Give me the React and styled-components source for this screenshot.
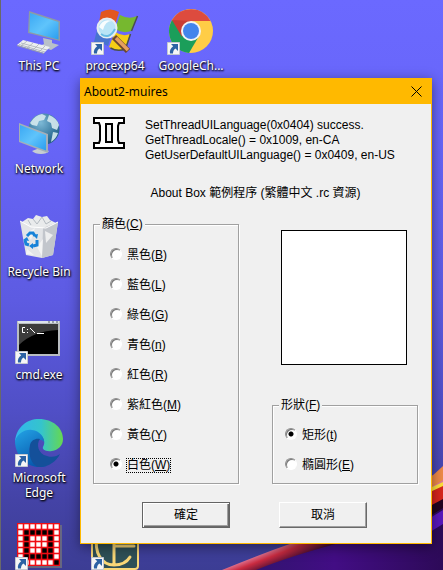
import React, { useState } from "react";
import styled, { createGlobalStyle } from "styled-components";

const GlobalStyle = createGlobalStyle`
  *, *::before, *::after { box-sizing: border-box; }
  body { margin: 0; }
`;

const Desktop = styled.main`
  position: relative;
  min-height: 100vh;
  overflow: hidden;
  isolation: isolate;
  border-left: 1px solid #696969;
  background: linear-gradient(#6b69ff 0, #6765f8 140px, #5d5be2 300px, #504fc6 410px, #4443a6 500px, #3c3d94 570px);
`;

const Wallpaper = styled.svg`
  position: absolute;
  inset: 0;
  width: 100%;
  height: 100%;
  z-index: -1;
`;

const IconGrid = styled.nav`
  height: 100vh;
  display: grid;
  grid-template-columns: repeat(auto-fill, 76px);
  grid-auto-rows: 103px;
`;

const Shortcut = styled.a`
  grid-column: ${(p) => p.$col};
  grid-row: ${(p) => p.$row};
  display: flex;
  flex-direction: column;
  align-items: center;
  gap: 3px;
  padding-top: 7px;
  color: #fff;
  font: 12px/15px "Noto Sans", "Open Sans", sans-serif;
  text-align: center;
  text-decoration: none;
  text-shadow: 1px 1px 2px #000, 0 1px 2px #000;
`;

const Picture = styled.svg`
  flex: none;
  width: 48px;
  height: 48px;
  overflow: visible;
`;

const Dialog = styled.section`
  position: absolute;
  top: 78px;
  left: 79px;
  right: 11px;
  border: 1px solid #ffb900;
  background: #f0f0f0;
  color: #000;
  font: 12px/15px "Liberation Sans", "Noto Sans CJK TC", sans-serif;
  box-shadow: 0 3px 12px rgba(0, 0, 0, 0.45);
`;

const TitleBar = styled.header`
  display: flex;
  align-items: center;
  justify-content: space-between;
  height: 25px;
  padding-left: 3px;
  background: #ffb900;
`;

const Title = styled.h1`
  margin: 0;
  font: 12px/16px "Noto Sans", "Open Sans", sans-serif;
`;

const CloseButton = styled.button`
  display: grid;
  place-items: center;
  width: 30px;
  height: 25px;
  padding: 0;
  border: 0;
  background: none;
`;

const Body = styled.form`
  padding: 13px 13px 15px 12px;
`;

const Intro = styled.div`
  display: flex;
  gap: 20px;
`;

const Emblem = styled.svg`
  flex: none;
  width: 32px;
  height: 32px;
`;

const Messages = styled.p`
  margin: 0;
  padding-top: 1px;
  white-space: nowrap;
`;

const Caption = styled.p`
  margin: 23px 0 0;
  text-align: center;
`;

const Columns = styled.div`
  display: grid;
  grid-template-columns: 1fr 1fr;
  gap: 33px;
  margin-top: 16px;
`;

const Side = styled.div`
  display: flex;
  flex-direction: column;
  justify-content: space-between;
`;

const Preview = styled.div`
  height: 135px;
  margin: 13px 11px 0 9px;
  border: 1px solid #000;
  background: #fff;
`;

const Group = styled.fieldset`
  min-width: 0;
  margin: 0;
  padding: ${(p) => (p.$inset ? "16px 0 10px 16px" : "15px 0 10px 12px")};
  border: 1px solid #a0a0a0;
  box-shadow: 1px 1px 0 #fff, inset 1px 1px 0 #fff;
`;

const Legend = styled.legend`
  margin-left: ${(p) => (p.$inset ? "-10px" : "-6px")};
  padding: 0 2px;
  background: #f0f0f0;
`;

const Options = styled.div`
  display: grid;
  gap: 15px;
  justify-items: start;
`;

const Option = styled.label`
  display: flex;
  align-items: flex-start;
  gap: 4px;
`;

const Radio = styled.input`
  appearance: none;
  width: 12px;
  height: 12px;
  margin: 0;
  border: 1px solid;
  border-color: #8c8c8c #fff #fff #8c8c8c;
  border-radius: 50%;
  background: #fff;
  box-shadow: inset 1px 1px 0 #777;
  outline: none;

  &:checked {
    background: radial-gradient(circle, #000 0 2px, #fff 3px);
  }
`;

const OptionText = styled.span`
  padding: 0 1px;
  outline: ${(p) => (p.$focused ? "1px dotted #000" : "none")};
  outline-offset: -1px;
`;

const Actions = styled.div`
  display: flex;
  justify-content: center;
  gap: 49px;
  margin-top: 18px;
  padding-right: 2px;
`;

const PushButton = styled.button`
  width: 88px;
  height: 26px;
  padding: 0;
  border: 1px solid;
  border-color: ${(p) => (p.$primary ? "#646464" : "#fff #696969 #696969 #fff")};
  border-radius: 0;
  background: #f0f0f0;
  box-shadow: ${(p) =>
    p.$primary
      ? "inset 1px 1px 0 #fff, inset -1px -1px 0 #696969, inset -2px -2px 0 #a0a0a0"
      : "inset -1px -1px 0 #a0a0a0"};
  color: #000;
  font: inherit;
`;

const COLORS = [
  ["黑色", "B"], ["藍色", "L"], ["綠色", "G"], ["青色", "n"],
  ["紅色", "R"], ["紫紅色", "M"], ["黃色", "Y"], ["白色", "W"],
];
const SHAPES = [["矩形", "t"], ["橢圓形", "E"]];

function ShortcutArrow() {
  return (
    <g>
      <path d="M.5 35.500h12v12H.5z" fill="#f6f6f6" stroke="#c4c8d0" />
      <path d="M4 37h7v7L8.500 41.500C6.500 43 6 44 6 46.500H3c-.7-3 .7-5.500 3.200-7.300z" fill="#2c62a4" />
    </g>
  );
}

function PcIcon() {
  return (
    <Picture viewBox="0 0 48 48">
      <defs>
        <linearGradient id="screen" x2="1" y2="1">
          <stop stopColor="#3ba8f4" /><stop offset=".5" stopColor="#5fc4fb" /><stop offset="1" stopColor="#2a9df0" />
        </linearGradient>
      </defs>
      <path d="m28 31 9 2v3l7 2-8 5-12-4 5-2z" fill="#b9c1c9" />
      <path d="M14 4 45 14v20L13 26z" fill="#8d9aa6" />
      <path d="m15 6 28.500 9v17.500L14.500 25z" fill="url(#screen)" />
      <path d="m8 33 27 7-6 6L2 38z" fill="#eceff0" />
      <path d="m2 38 27 8v1L2 39z" fill="#9ba2a8" />
      <path d="m6 36 26 7M4 37.500l26 7.500M12 34l-6 5M18 36l-6 5M24 37l-6 6M30 39l-6 6" stroke="#aab0b5" strokeWidth=".8" fill="none" />
    </Picture>
  );
}

function NetworkIcon() {
  return (
    <Picture viewBox="0 0 48 48">
      <defs>
        <radialGradient id="globe" cx=".4" cy=".3" r=".8">
          <stop stopColor="#7db9d6" /><stop offset=".6" stopColor="#39799f" /><stop offset="1" stopColor="#1c5580" />
        </radialGradient>
      </defs>
      <circle cx="29" cy="19" r="15.500" fill="url(#globe)" />
      <path d="M15 13q5-8 12-9l4 2-2 4-5 1-2 5-5-1zM34 5q8 3 10 10l-2 5-5-2-1-5-4-2zM38 22l5 1q-2 6-7 9z" fill="#d5e9ee" opacity=".9" />
      <path d="m22 34 6 2v3l6 2q-2 3-8 3t-9-3l5-2z" fill="#c6cdd2" />
      <path d="m4 13 29 11v19L4 32z" fill="#a3afb9" />
      <path d="m5 15 26 10v15.500L5 31z" fill="url(#screen)" />
    </Picture>
  );
}

function BinIcon() {
  return (
    <Picture viewBox="0 0 48 48">
      <path d="m7 9 6-4 5 1 3-4 6 2 5-1 3 4 6 3-5 6H12z" fill="#e9ebec" />
      <path d="m18 6 4 5 5-7 4 7 5-3M13 7l3 5" stroke="#b4bbc1" fill="none" />
      <path d="m5 8 11 6 15 1 12-6-5 33-11 3-16-3z" fill="#e2e4e7" />
      <path d="m28 15 15-6-5 33-11 3z" fill="#c2c6cc" />
      <path d="m12 20 8-5-4 12zM22 34l6-8-1 17zM30 18l8 4-7 8zM12 36l7 6-8-1z" fill="#f7f8f8" opacity=".8" />
      <path d="m5 8 11 6 15 1 12-6" fill="none" stroke="#fff" />
      <path d="m12 23 3-3h3l2 3M22 27v5l-4 1M14 32l-3-1-1-4" fill="none" stroke="#1782d8" strokeWidth="3" />
      <path d="m18 22 5-1-1 5zM18 30v6l-4-3zM8 27l4-3 2 4z" fill="#1782d8" />
    </Picture>
  );
}

function ProcexpIcon() {
  return (
    <Picture viewBox="0 0 48 48">
      <path d="M10 5q9-5 18 0l-5 16q-8-5-16 0z" fill="#e2571e" />
      <path d="M29 8q9 5 17 1l-6 15q-8 3-16-2z" fill="#76b82f" />
      <path d="M6 23q8-5 16 0l-5 16q-8-5-15 0z" fill="#4773cf" />
      <path d="M24 25q8 5 15 2l-5 15q-8 3-16-2z" fill="#f4cd16" />
      <path d="m46.500 9-6 15m-1 3-5 15q-8 3-15-1" fill="none" stroke="#49504a" strokeWidth="1.500" />
      <path d="m23 30 14 14" stroke="#6b4630" strokeWidth="6" />
      <path d="m25 31 12 12" stroke="#e6a05f" strokeWidth="3.500" />
      <circle cx="16" cy="21" r="9.500" fill="#b9e4f6" stroke="#e6edf1" strokeWidth="2" />
      <path d="M8 20q4-9 13-6-7 0-9 9z" fill="#fff" opacity=".9" />
      <path d="M10 27q8 6 14-5" stroke="#68bce5" fill="none" strokeWidth="2" />
      <ShortcutArrow />
    </Picture>
  );
}

function ChromeIcon() {
  return (
    <Picture viewBox="0 0 48 48">
      <circle cx="24" cy="24" r="22" fill="#ffcd46" />
      <path d="M24 24 5 13a22 22 0 0 0 17 33l10-17z" fill="#1b9e5a" />
      <path d="M24 24 5 13a22 22 0 0 1 38.500 1H24z" fill="#dd4b3e" />
      <path d="m5 13 10 17q-2-10 9-16z" fill="#c93d33" />
      <circle cx="24" cy="24" r="10" fill="#f4f4f4" />
      <circle cx="24" cy="24" r="8" fill="#4385ec" />
      <ShortcutArrow />
    </Picture>
  );
}

function CmdIcon() {
  return (
    <Picture viewBox="0 0 48 48">
      <path d="M2 5h43v35H2z" fill="#b9bdc1" />
      <path d="M3 5h41v2H3z" fill="#dce3ea" />
      <path d="M33 6h2m2 0h2m2 0h2" stroke="#555d66" />
      <path d="M4 8h39v30H4z" />
      <path d="M4 8h39v6Q18 15 4 29z" fill="#555" opacity=".7" />
      <path d="M10 11.500H7.500v5H10M12.500 13v1m0 2v1M15 12l5 5M22 17.500h7" stroke="#fff" fill="none" />
      <ShortcutArrow />
    </Picture>
  );
}

function EdgeIcon() {
  return (
    <Picture viewBox="0 0 48 48">
      <defs>
        <linearGradient id="edgeTop"><stop stopColor="#32b5ee" /><stop offset=".55" stopColor="#35c4cc" /><stop offset="1" stopColor="#66d850" /></linearGradient>
        <linearGradient id="edgeLow" x2=".5" y2="1"><stop stopColor="#24a4e6" /><stop offset="1" stopColor="#0759ae" /></linearGradient>
      </defs>
      <path d="M0 23C1 8 12 0 24 0c14 0 24 9 24 20 0 7-5 11-11 12-7 1-10-2-9-4 3-5 1-12-7-14C12 11 3 16 0 23z" fill="url(#edgeTop)" />
      <path d="M0 22c3-8 10-12 17-11 8 1 12 7 12 12-5-5-12-2-14 5-2 9 5 18 17 19-18 5-32-9-32-25z" fill="url(#edgeLow)" />
      <path d="M15 26c1-5 6-7 10-6-4 5-2 15 7 17 6 2 10 0 13-2-4 8-13 14-22 13-7-3-10-12-8-22z" fill="#14509a" />
      <ShortcutArrow />
    </Picture>
  );
}

const BOARD = ["0000000", "0111110", "0100010", "0100010", "0100110", "0111110", "0000001"];

function BoardIcon() {
  return (
    <Picture viewBox="0 0 48 48">
      <path d="M4 3h43v43H4z" fill="#777" opacity=".7" />
      <path d="M2 1h43v43H2z" fill="#f00d14" />
      {BOARD.flatMap((row, y) => [...row].map((cell, x) => (
        <path key={`${x}-${y}`} d={`M${3 + x * 6} ${2 + y * 6}h5v5h-5z`} fill={cell === "1" ? "#000" : "#fff"} stroke="#f00d14" strokeWidth=".6" />
      )))}
      <ShortcutArrow />
    </Picture>
  );
}

function GoldIcon() {
  return (
    <Picture viewBox="0 0 48 48">
      <rect x="1" y="1" width="46" height="46" rx="3" fill="#2e5057" stroke="#f9d777" strokeWidth="2" />
      <path d="M23 8v34M23 24h20M6 14c-3 16 4 29 17 29 8 0 13-3 16-8" fill="none" stroke="#f9d777" strokeWidth="3" strokeLinecap="round" />
      <ShortcutArrow />
    </Picture>
  );
}

const SHORTCUTS = [
  { label: "This PC", Icon: PcIcon, col: 1, row: 1 },
  { label: "procexp64", Icon: ProcexpIcon, col: 2, row: 1 },
  { label: "GoogleCh...", Icon: ChromeIcon, col: 3, row: 1 },
  { label: "Network", Icon: NetworkIcon, col: 1, row: 2 },
  { label: "Recycle Bin", Icon: BinIcon, col: 1, row: 3 },
  { label: "cmd.exe", Icon: CmdIcon, col: 1, row: 4 },
  { label: "Microsoft Edge", Icon: EdgeIcon, col: 1, row: 5 },
  { name: "Board", Icon: BoardIcon, col: 1, row: 6 },
  { name: "Calculator", Icon: GoldIcon, col: 2, row: 6 },
];

function RadioGroup({ title, hotkey, name, options, value, onChange, inset, focus }) {
  return (
    <Group $inset={inset}>
      <Legend $inset={inset}>{title}(<u>{hotkey}</u>)</Legend>
      <Options>
        {options.map(([text, key]) => (
          <Option key={key}>
            <Radio type="radio" name={name} checked={value === key} onChange={() => onChange(key)} />
            <OptionText $focused={focus && value === key}>{text}(<u>{key}</u>)</OptionText>
          </Option>
        ))}
      </Options>
    </Group>
  );
}

export default function App() {
  const [color, setColor] = useState("W");
  const [shape, setShape] = useState("t");
  return (
    <>
      <GlobalStyle />
      <Desktop>
        <Wallpaper viewBox="0 0 443 570" preserveAspectRatio="xMaxYMax slice" aria-hidden="true">
          <defs>
            <linearGradient id="violet" x1="0" x2="1"><stop stopColor="#2b1668" /><stop offset=".5" stopColor="#420d84" /><stop offset="1" stopColor="#2d0a58" /></linearGradient>
            <linearGradient id="ribbon" gradientUnits="userSpaceOnUse" x1="280" y1="546" x2="287" y2="564"><stop stopColor="#e07a98" /><stop offset=".35" stopColor="#c92b40" /><stop offset="1" stopColor="#2a0730" /></linearGradient>
          </defs>
          <path d="M226 570Q340 525 443 480v90z" fill="url(#violet)" />
          <path d="M222 570Q280 546 318 535L443 470v20L350 540Q290 556 256 570z" fill="url(#ribbon)" />
          <path d="M430 478 443 466v14l-13 8z" fill="#ef8a48" />
          <path d="m430 488 13-6v5l-13 6z" fill="#ffe23a" />
          <path d="m430 492 13-6v14l-13 7z" fill="#d8261c" />
          <path d="m430 506 13-7v9l-13 8z" fill="#220420" />
          <path d="m430 518 13-8v14l-13 8z" fill="#5a18bd" />
        </Wallpaper>
        <IconGrid aria-label="Desktop">
          {SHORTCUTS.map(({ label, name, Icon, col, row }) => (
            <Shortcut key={label || name} href="#" $col={col} $row={row} aria-label={label || name}>
              <Icon />
              {label}
            </Shortcut>
          ))}
        </IconGrid>
        <Dialog role="dialog" aria-labelledby="dialog-title">
          <TitleBar>
            <Title id="dialog-title">About2-muires</Title>
            <CloseButton type="button" aria-label="Close">
              <svg width="11" height="11" viewBox="0 0 11 11"><path d="m.5.5 10 10m0-10-10 10" stroke="#000" /></svg>
            </CloseButton>
          </TitleBar>
          <Body onSubmit={(e) => e.preventDefault()}>
            <Intro>
              <Emblem viewBox="0 0 32 32" aria-hidden="true">
                <path d="M1 1h30v5h-5l-1 3v14l1 3h5v5H1v-5h5l1-3V9L6 6H1z" fill="#fff" stroke="#000" strokeWidth="2" />
                <path d="M13 7h6v18h-6z" fill="#f0f0f0" stroke="#000" strokeWidth="2" />
              </Emblem>
              <Messages>
                SetThreadUILanguage(0x0404) success.<br />
                GetThreadLocale() = 0x1009, en-CA<br />
                GetUserDefaultUILanguage() = 0x0409, en-US
              </Messages>
            </Intro>
            <Caption>About Box 範例程序 (繁體中文 .rc 資源)</Caption>
            <Columns>
              <RadioGroup title="顏色" hotkey="C" name="color" options={COLORS} value={color} onChange={setColor} inset focus />
              <Side>
                <Preview />
                <RadioGroup title="形狀" hotkey="F" name="shape" options={SHAPES} value={shape} onChange={setShape} />
              </Side>
            </Columns>
            <Actions>
              <PushButton type="submit" $primary>確定</PushButton>
              <PushButton type="button">取消</PushButton>
            </Actions>
          </Body>
        </Dialog>
      </Desktop>
    </>
  );
}
